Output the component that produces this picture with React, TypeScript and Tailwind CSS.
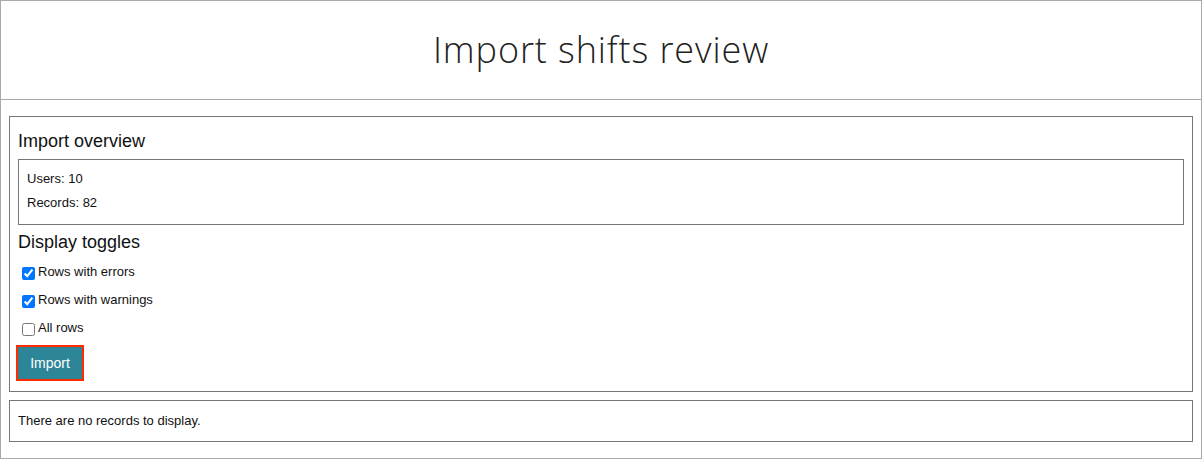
import { useState } from 'react'

const toggles = [
  { id: 'errors', label: 'Rows with errors', checked: true },
  { id: 'warnings', label: 'Rows with warnings', checked: true },
  { id: 'all', label: 'All rows', checked: false },
]

export default function App() {
  const [state, setState] = useState(toggles)

  return (
    <div className="h-[459px] w-[1202px] border border-[#a9a9a9] bg-white font-['Liberation_Sans',Arial,sans-serif] text-[13px] text-[#111]">
      <header className="flex h-[99px] items-center justify-center border-b border-[#a9a9a9]">
        <h1 className="font-['Open_Sans',sans-serif] text-[36px] font-light tracking-[0.9px] text-[#222]">
          Import shifts review
        </h1>
      </header>

      <main className="flex flex-col gap-2 px-2 pt-4">
        <section className="border border-[#777] px-2 pt-2 pb-2">
          <h2 className="text-[18px] leading-[32px]">Import overview</h2>
          <div className="mt-[2px] border border-[#777] px-2 pt-[7px] pb-[9px] leading-[24px]">
            <p>Users: 10</p>
            <p>Records: 82</p>
          </div>

          <h2 className="mt-[1px] text-[18px] leading-[32px]">Display toggles</h2>
          <div className="flex flex-col">
            {state.map((t) => (
              <label key={t.id} className="flex h-[28px] items-center">
                <input
                  type="checkbox"
                  className="mt-[2px] mr-[3px] ml-1 size-[13px]"
                  checked={t.checked}
                  onChange={() =>
                    setState((s) => s.map((x) => (x.id === t.id ? { ...x, checked: !x.checked } : x)))
                  }
                />
                {t.label}
              </label>
            ))}
          </div>

          <button className="mt-[5px] mb-1 h-[32px] w-[64px] bg-[#2d8698] text-[14px] text-white outline-2 outline-[#ff2a00]">
            Import
          </button>
        </section>

        <section className="border border-[#777] px-2 py-2 leading-[24px]">
          There are no records to display.
        </section>
      </main>
    </div>
  )
}
